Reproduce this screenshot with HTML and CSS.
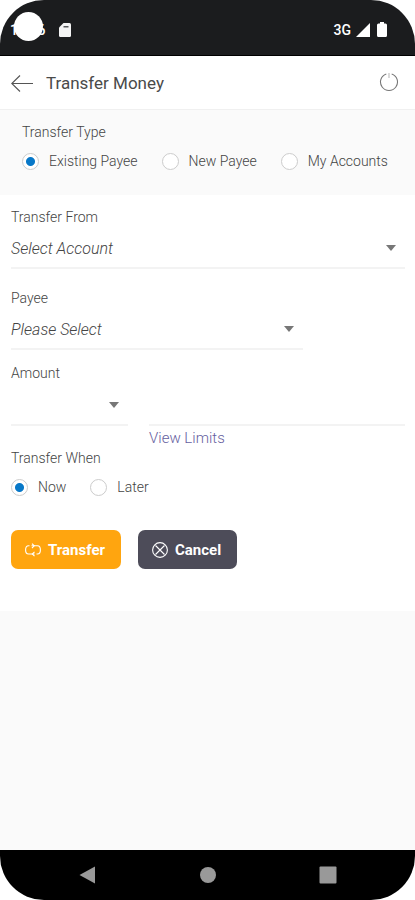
FILE: index.html
```html
<!DOCTYPE html>
<html lang="en">
<head>
<meta charset="utf-8">
<meta name="viewport" content="width=device-width, initial-scale=1">
<title>Transfer Money</title>
<link rel="stylesheet" href="styles.css">
</head>
<body>
<div class="phone">
  <div class="status">
    <span class="time">12:36</span>
    <span class="camera"></span>
    <svg class="sd" width="12" height="14" viewBox="0 0 12 14"><path d="M4.5 0H10.500Q12 0 12 1.500V12.500Q12 14 10.500 14H1.500Q0 14 0 12.500V4.500Z" fill="#f4f4f4"/><path d="M4.500 3.800H9.500" stroke="#55575a" stroke-width="1.500"/></svg>
    <span class="network">3G</span>
    <svg class="signal" width="14" height="14" viewBox="0 0 14 14"><path d="M14 0V14H0Z" fill="#fff"/></svg>
    <svg width="10" height="15" viewBox="0 0 10 15"><path d="M3 0H7V1.500H8.500Q10 1.500 10 3V13.500Q10 15 8.500 15H1.500Q0 15 0 13.500V3Q0 1.500 1.500 1.500H3Z" fill="#fff"/></svg>
  </div>

  <header class="header">
    <button class="icon-button" type="button" aria-label="Back">
      <svg width="23" height="18" viewBox="0 0 23 18" fill="none" stroke="#555" stroke-width="1.100"><path d="M22 9.500H.8M9 1.500L.8 9.500L9 17.500"/></svg>
    </button>
    <h1 class="title">Transfer Money</h1>
    <button class="icon-button" type="button" aria-label="Log out">
      <svg width="20" height="20" viewBox="0 0 20 20" fill="none" stroke="#777" stroke-width="1.100"><path d="M7.300 .9A8.500 8.500 0 1 0 12.700 .9"/><path d="M10 0V5" stroke="#bbb"/></svg>
    </button>
  </header>

  <form class="form">
    <fieldset class="type">
      <legend class="label">Transfer Type</legend>
      <div class="options">
        <label class="option"><input type="radio" name="type" checked>Existing Payee</label>
        <label class="option"><input type="radio" name="type">New Payee</label>
        <label class="option"><input type="radio" name="type">My Accounts</label>
      </div>
    </fieldset>

    <div class="fields">
      <div class="field">
        <label class="label" for="from">Transfer From</label>
        <div class="select"><select id="from"><option>Select Account</option></select></div>
      </div>
      <div class="field payee">
        <label class="label" for="payee">Payee</label>
        <div class="select"><select id="payee"><option>Please Select</option></select></div>
      </div>
      <div class="field amount">
        <label class="label" for="amount">Amount</label>
        <div class="amount-row">
          <div class="select currency"><select aria-label="Currency"><option></option></select></div>
          <div class="value">
            <input class="amount-input" id="amount" type="text" inputmode="decimal">
            <a class="limits" href="#limits">View Limits</a>
          </div>
        </div>
      </div>
      <fieldset class="when">
        <legend class="label">Transfer When</legend>
        <div class="options">
          <label class="option"><input type="radio" name="when" checked>Now</label>
          <label class="option"><input type="radio" name="when">Later</label>
        </div>
      </fieldset>
      <div class="actions">
        <button class="button primary" type="button">
          <svg width="16" height="14" viewBox="0 0 16 14" fill="none" stroke="#fff" stroke-width="1.100"><path d="M4.500 2.800H3.500Q.6 2.800 .6 7Q.6 11 3.500 11H9.500M11.500 11H12.500Q15.400 11 15.400 7Q15.400 2.800 12.500 2.800H6.500"/><path d="M7 .6L9.200 2.800L7 5M9.500 8.800L7.300 11L9.500 13.200"/></svg>
          Transfer
        </button>
        <button class="button secondary" type="button">
          <svg width="16" height="16" viewBox="0 0 16 16" fill="none" stroke="#fff" stroke-width="1.100"><circle cx="8" cy="8" r="7.400"/><path d="M3.500 3.500L12.500 12.500M12.500 3.500L3.500 12.500"/></svg>
          Cancel
        </button>
      </div>
    </div>
  </form>

  <nav class="nav">
    <button type="button" aria-label="Back"><svg width="18" height="18" viewBox="0 0 18 18"><path d="M.5 9L16 .5V17.500Z" fill="#999"/></svg></button>
    <button type="button" aria-label="Home"><svg width="18" height="18" viewBox="0 0 18 18"><circle cx="9" cy="9" r="8" fill="#999"/></svg></button>
    <button type="button" aria-label="Recent apps"><svg width="18" height="18" viewBox="0 0 18 18"><rect x=".5" y=".5" width="17" height="17" rx="1" fill="#999"/></svg></button>
  </nav>
</div>
</body>
</html>
```
FILE: styles.css
```css
* { box-sizing: border-box; }

body {
  margin: 0;
  background: #fff;
  color: #444;
  font-family: Roboto, sans-serif;
  font-size: 14px;
  font-weight: 300;
  line-height: 20px;
}

button {
  border: 0;
  padding: 0;
  background: none;
  font: inherit;
}

svg { display: block; flex: none; }

.phone {
  display: flex;
  flex-direction: column;
  min-height: 100vh;
  overflow: hidden;
  border-radius: 44px;
  background: #fafafa;
}

.status {
  position: relative;
  display: flex;
  align-items: center;
  height: 56px;
  padding: 4px 28px 0 10px;
  background: #1b1c1e;
  border-bottom: 1px solid #000;
  color: #fff;
  font-size: 14px;
  font-weight: 500;
}

.camera {
  position: absolute;
  top: 12px;
  left: 14px;
  width: 29px;
  height: 29px;
  border-radius: 50%;
  background: #fff;
}

.time { width: 49px; }
.network { margin-left: auto; }
.signal { margin: 0 7px 0 5px; }

.header {
  display: flex;
  align-items: center;
  gap: 12px;
  height: 54px;
  padding: 0 16px 0 11px;
  background: #fff;
  border-bottom: 1px solid #f0f0f0;
}

.title {
  flex: 1;
  margin: 0;
  color: #4a4a4a;
  font-size: 17px;
  font-weight: 400;
}

fieldset {
  min-width: 0;
  margin: 0;
  padding: 0;
  border: 0;
}

legend { padding: 0; }

.label { display: block; }

.form { padding-top: 12px; }

.type { padding: 0 22px 24px; }

.options {
  display: flex;
  gap: 24px;
  padding-top: 9px;
}

.option {
  display: flex;
  align-items: center;
  gap: 10px;
  white-space: nowrap;
}

input[type="radio"] {
  appearance: none;
  width: 17px;
  height: 17px;
  margin: 0;
  border: 1px solid #ccc;
  border-radius: 50%;
  background: #fff;
}

input[type="radio"]:checked {
  background: radial-gradient(circle, #0878c8 4px, #fff 5px);
}

.fields {
  padding: 12px 10px 42px 11px;
  background: #fff;
}

.field { margin-bottom: 19px; }

.select { position: relative; }

.select::after {
  content: "";
  position: absolute;
  top: 18px;
  right: 9px;
  border: 5px solid transparent;
  border-top: 6px solid #777;
  border-bottom: 0;
}

select,
.amount-input {
  appearance: none;
  display: block;
  width: 100%;
  height: 42px;
  margin: 0;
  padding: 2px 0 0;
  border: 0;
  border-bottom: 2px solid #f3f3f3;
  border-radius: 0;
  background: none;
  color: #444;
  font: italic 300 16px Roboto, sans-serif;
}

.payee {
  width: 74%;
  margin-bottom: 13px;
}

.amount { margin: 0; }

.amount-row {
  display: grid;
  grid-template-columns: 117px 1fr;
  gap: 21px;
  padding-top: 1px;
}

.limits {
  display: block;
  padding-top: 2px;
  color: #6660a0;
  font-size: 15px;
  text-decoration: none;
}

.actions {
  display: flex;
  gap: 17px;
  padding-top: 33px;
}

.button {
  display: flex;
  align-items: center;
  gap: 7px;
  height: 39px;
  padding: 0 16px 0 14px;
  border-radius: 7px;
  color: #fff;
  font-size: 15px;
  font-weight: 700;
}

.primary { background: #ffa50f; }
.secondary { background: #4d4c59; }

.nav {
  display: flex;
  align-items: center;
  justify-content: center;
  gap: 102px;
  height: 50px;
  margin-top: auto;
  background: #000;
}
```
